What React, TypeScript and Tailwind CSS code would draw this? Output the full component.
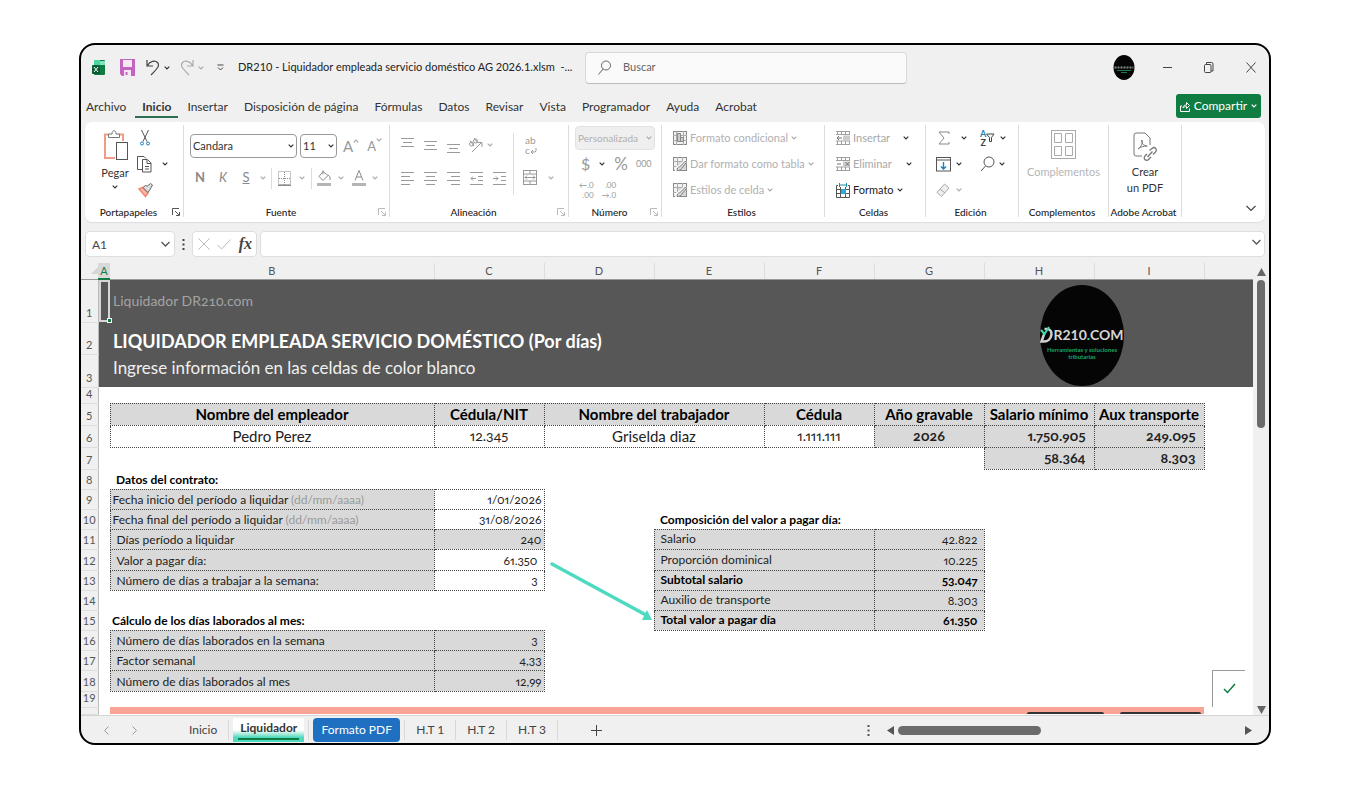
import React, { useState } from 'react';

type IconProps = { w: number; h: number; className?: string; children: React.ReactNode };

const Icon = ({ w, h, className = '', children }: IconProps) => (
  <svg width={w} height={h} viewBox={`0 0 ${w} ${h}`} fill="none" stroke="currentColor" className={`shrink-0 ${className}`} aria-hidden="true">
    {children}
  </svg>
);

const Chevron = ({ className = 'text-[#333]' }: { className?: string }) => (
  <Icon w={6} h={4} className={className}>
    <path d="M0.7 0.7 3 3 5.3 0.7" strokeWidth="1.2" />
  </Icon>
);

const Launcher = ({ className = 'text-[#aaa]' }: { className?: string }) => (
  <Icon w={8} h={8} className={className}>
    <path d="M0.5 7V0.5H7M3 3l4 4M7.5 4v3.5H4" />
  </Icon>
);

type GroupProps = { label: string; width: string; launcher?: string; children: React.ReactNode };

const Group = ({ label, width, launcher, children }: GroupProps) => (
  <section className={`flex flex-col shrink-0 border-r border-[#dcdcdc] h-[92px] ${width}`}>
    <div className="h-[78px] shrink-0">{children}</div>
    <div className="flex items-center h-[18px] shrink-0 pr-[3px]">
      <h2 className="grow text-center text-[10px] font-medium text-[#222] whitespace-nowrap">{label}</h2>
      {launcher && (
        <button aria-label={`Opciones de ${label}`}>
          <Launcher className={launcher} />
        </button>
      )}
    </div>
  </section>
);

type AlignProps = { lines: [number, number][]; label: string };

const AlignButton = ({ lines, label }: AlignProps) => (
  <button aria-label={label} className="w-[23px] flex justify-center text-[#9a9a9a]">
    <Icon w={13} h={15}>
      {lines.map(([x, len], i) => (
        <path key={i} d={`M${x} ${i * 4 + (lines.length === 4 ? 1.5 : 3.5)}h${len}`} />
      ))}
    </Icon>
  </button>
);

const TableIcon = ({ pen }: { pen?: boolean }) => (
  <Icon w={14} h={14} className="text-[#8a8a8a]">
    <rect x="0.5" y="0.5" width="13" height="13" fill="#f2f2f2" />
    {pen ? (
      <>
        <path d="M4.500 0v14M9.500 0v5M0 4.500h14M0 9.500h5" stroke="#aaa" />
        <rect x="5" y="5" width="8" height="8" fill="#d8d8d8" stroke="none" />
        <path d="M4 14c0-3 1-4 3-4L13 4" stroke="#fff" strokeWidth="4" />
        <path d="M4 13.500c0-2 1-3.500 2.500-3.500L12.500 4l1 1.500L8.500 11.500C8 13 6 13.500 4 13.500z" fill="#ddd" stroke="#777" />
      </>
    ) : (
      <>
        <path d="M3.500 0v14M10.500 0v14M0 4.500h14M0 9.500h14" stroke="#aaa" />
        <path d="M4.500 2.500h3v8h-3zM7.500 6.500h3v4h-3z" fill="#ccc" stroke="#888" />
      </>
    )}
  </Icon>
);

const CellsIcon = ({ mark }: { mark: string }) => (
  <Icon w={14} h={14} className="text-[#a0a0a0]">
    <path d="M0 0.500h14M0 13.500h14M1.500 0.500v3M1.500 10v4M5.500 0.500v3M9.500 0.500v3M13.500 0v4M5.500 10v4M9.500 10v4M13.500 10v4M0 10h14M0 3.500h14" />
    <rect x="7" y="4.500" width="7" height="5" fill="#ccc" stroke="none" />
    <path d={mark} stroke="#777" />
  </Icon>
);

const menuTabs = ['Archivo', 'Inicio', 'Insertar', 'Disposición de página', 'Fórmulas', 'Datos', 'Revisar', 'Vista', 'Programador', 'Ayuda', 'Acrobat'];

const columns = [
  { name: 'A', width: 'w-[12px]' },
  { name: 'B', width: 'w-[324px]' },
  { name: 'C', width: 'w-[110px]' },
  { name: 'D', width: 'w-[110px]' },
  { name: 'E', width: 'w-[110px]' },
  { name: 'F', width: 'w-[110px]' },
  { name: 'G', width: 'w-[110px]' },
  { name: 'H', width: 'w-[110px]' },
  { name: 'I', width: 'w-[110px]' },
];

const RowNum = ({ n }: { n?: number }) => (
  <th scope="row" className="bg-[#f0f0f0] border-r border-r-[#bbb] border-b border-b-[#ddd] align-bottom text-[11px] leading-[12px] pb-[3px] normal-nums font-normal text-[#555] text-center">
    {n}
  </th>
);

const box = 'border border-dotted border-[#444] ';
const gray = 'bg-[#d9d9d9] ';

const TitleBar = () => (
  <header className="flex items-center h-[45px] text-[#444]">
    <div className="flex items-center w-[504px] shrink-0 pl-[11px]">
      <Icon w={14} h={16}>
        <rect x="2" y="0" width="11" height="15" rx="1" fill="#107c41" stroke="none" />
        <path d="M2 0h6v6H2z" fill="#4bd3a0" stroke="none" />
        <path d="M8 1h5v4H8z" fill="#7fe3c0" stroke="none" />
        <rect x="0" y="5" width="8" height="9" rx="1" fill="#0b5c33" stroke="none" />
        <path d="m2 7 4 5M6 7l-4 5" stroke="#fff" />
      </Icon>
      <button aria-label="Guardar" className="ml-[14px]">
        <Icon w={15} h={17}>
          <path d="M0 0h15v17H2l-2-2z" fill="#c265c0" stroke="none" />
          <path d="M3 1h9v7H3zM4 11h7v6H4z" fill="#f5e8f5" stroke="none" />
          <path d="M6.500 13v3" stroke="#c265c0" strokeWidth="2" />
        </Icon>
      </button>
      <button aria-label="Deshacer" className="flex items-center gap-[4px] ml-[11px]">
        <Icon w={14} h={17}>
          <path d="M1 1v6h6M1.500 6.500C4 2 9 1 11.500 3.500 14 6.500 12 9 5 16" strokeWidth="1.200" />
        </Icon>
        <Chevron />
      </button>
      <button aria-label="Rehacer" className="flex items-center gap-[4px] ml-[10px] text-[#aaa]">
        <Icon w={14} h={17}>
          <path d="M13 1v6H7M12.500 6.500C10 2 5 1 2.500 3.500 0 6.500 2 9 9 16" strokeWidth="1.200" />
        </Icon>
        <Chevron className="text-[#aaa]" />
      </button>
      <button aria-label="Personalizar" className="ml-[13px]">
        <Icon w={7} h={7}>
          <path d="M0.500 1h6M1 3.500 3.500 6 6 3.500" />
        </Icon>
      </button>
      <h1 className="ml-[14px] text-[11px] text-[#222] whitespace-nowrap">DR210 - Liquidador empleada servicio doméstico AG 2026.1.xlsm&nbsp; -...</h1>
    </div>
    <label className="flex items-center gap-[12px] w-[322px] h-[32px] pl-[12px] bg-[#fafafa] border border-[#d8d8d8] border-b-[#bbb] rounded-[4px] text-[#666]">
      <Icon w={13} h={15}>
        <circle cx="8" cy="5.500" r="4.500" />
        <path d="M5 9 0.500 14.500" />
      </Icon>
      <input aria-label="Buscar" placeholder="Buscar" className="grow min-w-0 bg-transparent outline-none text-[11px] placeholder:text-[#666]" />
    </label>
    <div className="flex items-center gap-[22px] ml-auto pr-[8px]">
      <Icon w={22} h={25}>
        <ellipse cx="11" cy="12.500" rx="10.500" ry="12.500" fill="#050505" stroke="none" />
        <path d="M1.500 12.500h19" stroke="#888" strokeWidth="2" strokeDasharray="2 1" />
        <path d="M4 15.500h14" stroke="#1c7a4c" />
        <path d="M8 17.500h6" stroke="#1c7a4c" />
      </Icon>
      <button aria-label="Minimizar" className="w-[20px] flex justify-center">
        <Icon w={9} h={9}><path d="M0 4.500h9" /></Icon>
      </button>
      <button aria-label="Restaurar" className="w-[20px] flex justify-center">
        <Icon w={10} h={11}>
          <rect x="0.500" y="2.500" width="6.500" height="8" rx="1" />
          <path d="M2.500 2V0.500H7.500Q9 0.500 9 2v7H7" />
        </Icon>
      </button>
      <button aria-label="Cerrar" className="w-[20px] flex justify-center">
        <Icon w={10} h={11}><path d="m0.500 0.500 9 10M9.500 0.500l-9 10" /></Icon>
      </button>
    </div>
  </header>
);

const MenuBar = () => (
  <nav className="flex items-center h-[32px] pl-[5px] pr-[8px]">
    <ul className="flex gap-[16px] mt-[2px] text-[12px] text-[#333] whitespace-nowrap">
      {menuTabs.map((tab) => (
        <li key={tab} className="relative">
          <button className={tab === 'Inicio' ? 'font-bold' : ''}>{tab}</button>
          {tab === 'Inicio' && <span className="absolute -inset-x-[7px] bottom-[-2px] h-[2px] bg-[#2c6e50]" />}
        </li>
      ))}
    </ul>
    <button className="flex items-center justify-center gap-[4px] ml-auto w-[85px] h-[24px] rounded-[3px] bg-[#107c41] text-white text-[12px]">
      <Icon w={10} h={11}>
        <path d="M2 5H0.500v5.500h9V7.500M3 7c0-2.500 2-3 3.500-3V1.500L9.500 4.500 6.500 7.500V5.500C5 5.500 4 6 3 7z" />
      </Icon>
      Compartir
      <Chevron className="text-white" />
    </button>
  </nav>
);

const Ribbon = () => (
  <div className="flex mx-[4px] h-[100px] pt-[3px] bg-white rounded-[7px] shadow-[0_1px_1px_#ddd] text-[11px]">
    <Group label="Portapapeles" width="w-[99px]" launcher="text-[#555]">
      <div className="flex">
        <button className="flex flex-col items-center ml-[14px] w-[32px] pt-[5px] text-[#333]">
          <Icon w={25} h={30} className="ml-[2px]">
            <path d="M4 4.500H1V28H11" stroke="#f29b88" strokeWidth="2" />
            <path d="M14 4.500h5V11" stroke="#f29b88" strokeWidth="2" />
            <path d="M4.500 7.500V4h3.500c0-4.500 4-4.500 4 0h3.500v3.500z" fill="#fff" stroke="#777" />
            <rect x="12.500" y="12.500" width="11" height="17" fill="#fff" stroke="#555" />
          </Icon>
          <span className="leading-[16px] mt-[5px]">Pegar</span>
          <span className="mt-[4px]"><Chevron /></span>
        </button>
        <div className="flex flex-col ml-[5px]">
          <button aria-label="Cortar" className="h-[26px] w-[18px] flex items-center justify-center">
            <Icon w={10} h={16}>
              <path d="M1.500 0 7 11.500M8.500 0 3 11.500" stroke="#555" />
              <circle cx="2" cy="13.500" r="1.500" stroke="#1f7fc0" />
              <circle cx="8" cy="13.500" r="1.500" stroke="#1f7fc0" />
            </Icon>
          </button>
          <button aria-label="Copiar" className="h-[26px] flex items-center gap-[10px] pl-[1px]">
            <Icon w={15} h={17} className="text-[#555]">
              <path d="M5 13.500H0.500V0.500H7l2 2" />
              <path d="M5.500 3.500h5l3.500 3.500v9H5.500zM10 4v3.500h4M8 10.500h4M8 13h4" />
            </Icon>
            <Chevron />
          </button>
          <button aria-label="Copiar formato" className="h-[26px] w-[18px] flex items-center justify-center">
            <Icon w={15} h={15}>
              <path d="M1 6 7.500 13.500 10 10 4.500 4.500z" fill="#fbb8a6" stroke="#f08a74" strokeWidth="1.500" />
              <path d="M5 4.500 10 9.500 12 6.500 14.500 2 12.500 0.500 9.500 3 7.500 2.500z" fill="#ddd" stroke="#666" />
            </Icon>
          </button>
        </div>
      </div>
    </Group>

    <Group label="Fuente" width="w-[206px]" launcher="text-[#bbb]">
      <div className="flex items-center gap-[3px] pl-[6px] pt-[9px] text-[#333]">
        <div className="relative">
          <select aria-label="Fuente" className="appearance-none w-[107px] h-[24px] pl-[2px] border border-[#999] rounded-[4px] text-[11px] bg-white">
            <option>Candara</option>
          </select>
          <span className="absolute right-[3px] top-[10px]"><Chevron /></span>
        </div>
        <div className="relative">
          <select aria-label="Tamaño de fuente" className="appearance-none w-[37px] h-[24px] pl-[2px] border border-[#999] rounded-[4px] text-[11px] bg-white">
            <option>11</option>
          </select>
          <span className="absolute right-[3px] top-[10px]"><Chevron /></span>
        </div>
        <button aria-label="Aumentar tamaño" className="flex ml-[3px] text-[#999] text-[15px] leading-[20px]">
          A<Chevron className="mt-[3px] rotate-180 text-[#aaa]" />
        </button>
        <button aria-label="Disminuir tamaño" className="flex ml-[5px] text-[#999] text-[13px] leading-[20px]">
          A<Chevron className="mt-[2px] text-[#aaa]" />
        </button>
      </div>
      <div className="flex items-center h-[24px] mt-[8px] pl-[6px] text-[#8a8a8a] text-[13px]">
        <button className="w-[20px] font-bold">N</button>
        <button className="w-[26px] italic">K</button>
        <button className="w-[20px] underline">S</button>
        <span className="w-[14px] flex justify-center"><Chevron className="text-[#aaa]" /></span>
        <span className="w-px h-[21px] bg-[#ddd] ml-[1px]" />
        <button aria-label="Bordes" className="flex items-center gap-[8px] ml-[6px]">
          <Icon w={13} h={15}>
            <rect x="0.500" y="0.500" width="12" height="13" strokeDasharray="1 1" />
            <path d="M6.500 1v13M1 7.500h12" strokeDasharray="1 1" />
            <path d="M0 14.500h13" strokeWidth="1.500" />
          </Icon>
          <Chevron className="text-[#aaa]" />
        </button>
        <span className="w-px h-[21px] bg-[#ddd] ml-[6px]" />
        <button aria-label="Color de relleno" className="flex items-center gap-[6px] ml-[5px]">
          <Icon w={15} h={16}>
            <path d="M6 0.500v4M6 1.500 2 6.500l4 4 5-5zM11 5c1.500 1 2.500 2 2 5" />
            <path d="M0 14.500h14" stroke="#b5b5b5" strokeWidth="3" />
          </Icon>
          <Chevron className="text-[#aaa]" />
        </button>
        <button aria-label="Color de fuente" className="flex items-center gap-[6px] ml-[8px]">
          <Icon w={14} h={16}>
            <path d="M3 10.500 7 0.500l4 10M4.500 7h5" />
            <path d="M0 14.500h14" stroke="#b5b5b5" strokeWidth="3" />
          </Icon>
          <Chevron className="text-[#aaa]" />
        </button>
      </div>
    </Group>

    <Group label="Alineación" width="w-[179px]" launcher="text-[#bbb]">
      <div className="flex pl-[6px]">
        <div className="w-[118px] border-r border-[#ddd] h-[62px] mt-[8px]">
          <div className="flex items-center h-[24px]">
            <span className="-mt-[6px]"><AlignButton label="Alinear arriba" lines={[[0, 13], [2, 9], [0, 13]]} /></span>
            <AlignButton label="Alinear en medio" lines={[[0, 13], [2, 9], [0, 13]]} />
            <span className="mt-[6px]"><AlignButton label="Alinear abajo" lines={[[0, 13], [2, 9], [0, 13]]} /></span>
            <button aria-label="Orientación" className="flex items-center gap-[4px] ml-[3px] text-[#999]">
              <Icon w={15} h={15}>
                <circle cx="3.500" cy="6" r="2" />
                <circle cx="7.500" cy="3" r="2" />
                <path d="M2 2.500 6 8M6 0l3.500 4.500M4 14 13 5M9.500 4.500H14V9" />
              </Icon>
              <Chevron className="text-[#aaa]" />
            </button>
          </div>
          <div className="flex items-center h-[24px] mt-[9px]">
            <AlignButton label="Alinear a la izquierda" lines={[[0, 13], [0, 9], [0, 13], [0, 9]]} />
            <AlignButton label="Centrar" lines={[[0, 13], [2, 9], [0, 13], [2, 9]]} />
            <AlignButton label="Alinear a la derecha" lines={[[0, 13], [4, 9], [0, 13], [4, 9]]} />
            <button aria-label="Disminuir sangría" className="w-[23px] flex justify-center text-[#9a9a9a]">
              <Icon w={13} h={15}><path d="M0 1.500h13M8 5.500h5M8 9.500h5M0 13.500h13M6 7.500H1M3 5.500l-2 2 2 2" /></Icon>
            </button>
            <button aria-label="Aumentar sangría" className="w-[23px] flex justify-center text-[#9a9a9a]">
              <Icon w={13} h={15}><path d="M0 1.500h13M8 5.500h5M8 9.500h5M0 13.500h13M0 7.500h5M3 5.500l2 2-2 2" /></Icon>
            </button>
          </div>
        </div>
        <div className="flex flex-col text-[#999] pl-[9px] pt-[10px]">
          <button aria-label="Ajustar texto" className="flex flex-col text-[10px] leading-[10px] items-start h-[22px] pl-[2px]">
            <span>ab</span>
            <span className="flex">
              c<Icon w={7} h={8} className="mt-[2px]"><path d="M1 5h4q1.500-1 1-4M3 3 1 5l2 2" /></Icon>
            </span>
          </button>
          <button aria-label="Combinar y centrar" className="flex items-center gap-[11px] mt-[13px]">
            <Icon w={14} h={15}>
              <rect x="0.500" y="0.500" width="13" height="14" />
              <path d="M0 4h14M0 11h14M7 0v4M7 11v4M2 7.500h10M4 5.500l-2 2 2 2M10 5.500l2 2-2 2" />
            </Icon>
            <Chevron className="text-[#aaa]" />
          </button>
        </div>
      </div>
    </Group>

    <Group label="Número" width="w-[93px]" launcher="text-[#bbb]">
      <div className="px-[6px] text-[#999]">
        <div className="relative h-[26px] pt-[1px]">
          <select aria-label="Formato de número" disabled className="appearance-none w-full h-[24px] pl-[2px] bg-[#efefef] border border-[#e2e2e2] rounded-[4px] text-[10px] text-[#b0b0b0] opacity-100">
            <option>Personalizada</option>
          </select>
          <span className="absolute right-[3px] top-[11px]"><Chevron className="text-[#aaa]" /></span>
        </div>
        <div className="flex items-center h-[26px] pl-[6px]">
          <button className="text-[16px]">$</button>
          <span className="ml-[9px]"><Chevron /></span>
          <button className="ml-[9px] text-[17px]">%</button>
          <button className="ml-[8px] text-[9px]">000</button>
        </div>
        <div className="flex items-center h-[26px] pl-[4px] gap-[8px] text-[8px] leading-[10px]">
          <button aria-label="Aumentar decimales" className="text-right"><span className="block">←.0</span><span className="block">.00</span></button>
          <button aria-label="Disminuir decimales" className="text-right"><span className="block">.00</span><span className="block">→.0</span></button>
        </div>
      </div>
    </Group>

    <Group label="Estilos" width="w-[163px]">
      <div className="pl-[11px] text-[#b0b0b0] whitespace-nowrap">
        <button className="flex items-center gap-[3px] h-[26px]"><TableIcon />Formato condicional<Chevron className="text-[#aaa]" /></button>
        <button className="flex items-center gap-[3px] h-[26px]"><TableIcon pen />Dar formato como tabla<Chevron className="text-[#aaa]" /></button>
        <button className="flex items-center gap-[3px] h-[26px]"><TableIcon pen />Estilos de celda<Chevron className="text-[#aaa]" /></button>
      </div>
    </Group>

    <Group label="Celdas" width="w-[101px]">
      <div className="pl-[11px] text-[#a8a8a8]">
        <div className="flex items-center h-[26px] w-[73px] justify-between">
          <button className="flex items-center gap-[3px]"><CellsIcon mark="M6 7H1M3 5 1 7l2 2" />Insertar</button><Chevron />
        </div>
        <div className="flex items-center h-[26px] w-[76px] justify-between">
          <button className="flex items-center gap-[3px]"><CellsIcon mark="M1 7h4M9.500 5l4 4M13.500 5l-4 4" />Eliminar</button><Chevron />
        </div>
        <button className="flex items-center gap-[3px] h-[26px] text-[#222]">
          <Icon w={14} h={15} className="text-[#555]">
            <path d="M2 2.500H0.500v12h13v-12H12M0 6.500h14M0 10.500h14M4.500 4v11M9.500 4v11" />
            <path d="M5 6h5v5H5z" fill="#2aa8d8" stroke="none" />
            <path d="M3.500 0v4M10.500 0v4M4 2h6" stroke="#1590a8" />
          </Icon>
          Formato<Chevron />
        </button>
      </div>
    </Group>

    <Group label="Edición" width="w-[93px]">
      <div className="grid grid-cols-[44px_40px] pl-[10px] text-[#888]">
        <button aria-label="Autosuma" className="flex items-center gap-[11px] h-[26px] pl-[2px]">
          <Icon w={12} h={14}><path d="M11 3V1H1l5 6-5 6h10v-2" /></Icon>
          <Chevron />
        </button>
        <button aria-label="Ordenar y filtrar" className="flex items-center gap-[5px] h-[26px] text-[#444]">
          <span className="flex">
            <span className="flex flex-col text-[9px] leading-[9px] font-bold"><span className="text-[#1a7fb0]">A</span><span>Z</span></span>
            <Icon w={9} h={10} className="mt-[4px]"><path d="M0.500 1h7.500L5.500 4.500v4h-2v-4z" /></Icon>
          </span>
          <Chevron />
        </button>
        <button aria-label="Rellenar" className="flex items-center gap-[5px] h-[26px]">
          <Icon w={15} h={15} className="text-[#555]">
            <rect x="0.500" y="0.500" width="14" height="13.500" />
            <path d="M0 3h15" />
            <path d="M7.500 5v7M5 9.500 7.500 12 10 9.500" stroke="#1a80c0" strokeWidth="1.400" />
          </Icon>
          <Chevron />
        </button>
        <button aria-label="Buscar y seleccionar" className="flex items-center gap-[4px] h-[26px]">
          <Icon w={15} h={16} className="text-[#555]"><circle cx="9" cy="6" r="5" /><path d="M5.500 10 1 15" /></Icon>
          <Chevron />
        </button>
        <button aria-label="Borrar" className="flex items-center gap-[5px] h-[26px]">
          <Icon w={15} h={15} className="text-[#aaa]"><path d="M1 9.500 8.500 1 13 5 5.500 13.500zM4 6l5 4" fill="#eee" /></Icon>
          <Chevron className="text-[#aaa]" />
        </button>
      </div>
    </Group>

    <Group label="Complementos" width="w-[90px]">
      <button className="flex flex-col items-center w-full pt-[5px] text-[#b5b5b5]">
        <Icon w={25} h={29} className="text-[#aaa]">
          <rect x="0.500" y="0.500" width="24" height="28" />
          <path d="M3.500 3.500h7v9h-7zM14.500 3.500h7v9h-7zM3.500 16.500h7v9h-7zM14.500 16.500h7v9h-7z" />
        </Icon>
        <span className="leading-[16px] mt-[5px]">Complementos</span>
      </button>
    </Group>

    <Group label="Adobe Acrobat" width="w-[73px]">
      <button className="flex flex-col items-center w-full pt-[7px] text-[#333]">
        <Icon w={24} h={29} className="text-[#777]">
          <path d="M9 24H3Q1 24 1 22V3Q1 1 3 1h9l5 5v7" />
          <path d="M5 17c4-3 5-7 4-9M8.500 8c0 4 3 6 6 6M5 17c2-2 6-3 9-3" />
          <path d="m14 22-2 2c-2.500 3 1.500 5.500 3.500 3.500L18 25M16.500 18.500 19 16.500c3-2.500 5.500 1 3.500 3.500L20 22.500M14.500 25 19.500 19.500" strokeWidth="1.300" />
        </Icon>
        <span className="leading-[16px] mt-[3px]">Crear<br />un PDF</span>
      </button>
    </Group>

    <button aria-label="Contraer la cinta" className="ml-auto self-end mr-[9px] mb-[10px]">
      <Icon w={10} h={7} className="text-[#444]"><path d="M0.500 1 5 5.500 9.500 1" strokeWidth="1.200" /></Icon>
    </button>
  </div>
);

const FormulaBar = () => (
  <div className="flex items-center h-[26px] mt-[9px] px-[4px]">
    <label className="relative">
      <input aria-label="Cuadro de nombres" defaultValue="A1" className="block w-[90px] h-[26px] pl-[6px] bg-white border border-[#dedede] rounded-[4px] text-[12px] text-[#444]" />
      <span className="absolute right-[5px] top-[10px] text-[#555]">
        <Icon w={9} h={7}><path d="M0.500 1 4.500 5 8.500 1" strokeWidth="1.300" /></Icon>
      </span>
    </label>
    <Icon w={3} h={12} className="ml-[7px] text-[#444]"><path d="M1.500 1v11" strokeWidth="2" strokeDasharray="2 2.500" /></Icon>
    <div className="flex items-center justify-between w-[65px] h-[26px] ml-[7px] pl-[5px] pr-[4px] bg-white border border-[#dedede] rounded-[4px] text-[#bbb]">
      <button aria-label="Cancelar"><Icon w={12} h={12}><path d="m0.500 0.500 11 11M11.500 0.500l-11 11" /></Icon></button>
      <button aria-label="Introducir"><Icon w={14} h={11}><path d="M0.500 6 4.500 10 13.500 0.500" /></Icon></button>
      <button aria-label="Insertar función" className="font-['Liberation_Serif',serif] italic font-bold text-[16px] leading-[20px] text-[#444]">fx</button>
    </div>
    <div className="relative grow ml-[3px]">
      <input aria-label="Barra de fórmulas" className="block w-full h-[26px] bg-white border border-[#dedede] rounded-[4px] px-[6px] text-[12px]" />
      <Icon w={9} h={7} className="absolute right-[4px] top-[8px] text-[#555]"><path d="M0.500 1 4.500 5 8.500 1" strokeWidth="1.300" /></Icon>
    </div>
  </div>
);

const Logo = () => (
  <div className="absolute left-[56px] top-[5px] w-[84px] h-[101px] rounded-[50%] bg-[#050505] flex flex-col items-center pt-[41px]">
    <div className="flex items-center text-[14px] leading-[18px] font-bold text-[#d5d5d5]">
      <Icon w={13} h={18}>
        <path d="M4.500 3H7c7 0 5.500 12.500-3 12.500H1.500L4.500 7" stroke="#d0d0d0" strokeWidth="2.500" />
        <path d="M1 4 4.500 8 9 1" stroke="#3fd9a8" strokeWidth="2" />
      </Icon>
      <span>R210<span className="text-[#3fd9a8]">.</span>COM</span>
    </div>
    <p className="text-[6px] leading-[7px] font-bold text-[#17a566] text-center whitespace-nowrap mt-[2px]">Herramientas y soluciones<br />tributarias</p>
  </div>
);

const Sheet = () => (
  <table className="table-fixed border-collapse w-full bg-white text-[#222] whitespace-nowrap">
    <colgroup>
      <col className="w-[17px]" />
      {columns.map((c) => (
        <col key={c.name} className={c.width} />
      ))}
      <col />
    </colgroup>
    <thead>
      <tr className="h-[16px] bg-[#f0f0f0] text-[11px] leading-[15px] text-[#555]">
        <td className="border-b border-[#999]">
          <Icon w={7} h={7} className="ml-auto text-[#d5d5d5]"><path d="M7 0v7H0z" fill="currentColor" stroke="none" /></Icon>
        </td>
        {columns.map((c) => (
          <th key={c.name} scope="col" className={c.name === 'A' ? 'font-normal bg-[#d8d8d8] text-[#107c41] border-b-2 border-[#107c41] leading-[13px]' : 'font-normal border-r border-r-[#ddd] border-b border-b-[#999]'}>
            {c.name}
          </th>
        ))}
        <td className="border-b border-[#999]" />
      </tr>
    </thead>
    <tbody>
      <tr className="h-[43px] bg-[#575757]">
        <RowNum n={1} />
        <td className="relative">
          <span className="absolute inset-y-0 left-0 right-0 border-2 border-[#d6d6d6]" />
          <span className="absolute -right-[2px] -bottom-[1px] w-[5px] h-[5px] bg-[#107c41] border border-white" />
        </td>
        <td colSpan={6} className="pl-[3px] text-[14px] text-[#a3a3a3] oldstyle-nums">Liquidador DR210.com</td>
        <td colSpan={3} className="relative"><Logo /></td>
      </tr>
      <tr className="h-[32px] bg-[#575757]">
        <RowNum n={2} />
        <td />
        <td colSpan={9} className="pl-[3px] align-bottom text-[18px] leading-[26px] font-bold text-white">LIQUIDADOR EMPLEADA SERVICIO DOMÉSTICO (Por días)</td>
      </tr>
      <tr className="h-[33px] bg-[#575757]">
        <RowNum n={3} />
        <td />
        <td colSpan={9} className="pl-[3px] align-top text-[17px] leading-[28px] text-[#f0f0f0]">Ingrese información en las celdas de color blanco</td>
      </tr>
      <tr className="h-[16px]">
        <RowNum n={4} />
      </tr>
      <tr className="h-[22px] text-[15px] leading-[20px] text-black text-center">
        <RowNum n={5} />
        <td />
        <th className={box + gray}>Nombre del empleador</th>
        <th className={box + gray}>Cédula/NIT</th>
        <th colSpan={2} className={box + gray}>Nombre del trabajador</th>
        <th className={box + gray}>Cédula</th>
        <th className={box + gray}>Año gravable</th>
        <th className={box + gray}>Salario mínimo</th>
        <th className={box + gray}>Aux transporte</th>
      </tr>
      <tr className="h-[22px] text-[15px] leading-[20px] text-center oldstyle-nums proportional-nums">
        <RowNum n={6} />
        <td />
        <td className={box}>Pedro Perez</td>
        <td className={box + 'text-[14px]'}>12.345</td>
        <td colSpan={2} className={box}>Griselda diaz</td>
        <td className={box + 'text-[14px]'}>1.111.111</td>
        <td className={box + gray + 'text-[14px] font-bold'}>2026</td>
        <td className={box + gray + 'text-[14px] font-bold text-right pr-[8px]'}>1.750.905</td>
        <td className={box + gray + 'text-[14px] font-bold text-right pr-[8px]'}>249.095</td>
      </tr>
      <tr className="h-[22px] text-[14px] leading-[20px] font-bold text-right oldstyle-nums proportional-nums">
        <RowNum n={7} />
        <td colSpan={7} />
        <td className={box + gray + 'pr-[8px]'}>58.364</td>
        <td className={box + gray + 'pr-[8px]'}>8.303</td>
      </tr>
      <tr className="h-[20px] text-[12px] leading-[16px]">
        <RowNum n={8} />
        <td />
        <th className="pl-[6px] pt-[2px] text-left text-black">Datos del contrato:</th>
      </tr>
      <tr className="h-[20px] text-[12px] leading-[16px] oldstyle-nums proportional-nums">
        <RowNum n={9} />
        <td />
        <td className={box + gray + 'pt-[2px] pl-[2px]'}>Fecha inicio del período a liquidar <span className="text-[#999]">(dd/mm/aaaa)</span></td>
        <td className={box + 'pt-[2px] pr-[2px] text-right'}>1/01/2026</td>
      </tr>
      <tr className="h-[20px] text-[12px] leading-[16px] oldstyle-nums proportional-nums">
        <RowNum n={10} />
        <td />
        <td className={box + gray + 'pt-[2px] pl-[2px]'}>Fecha final del período a liquidar <span className="text-[#999]">(dd/mm/aaaa)</span></td>
        <td className={box + 'pt-[2px] pr-[2px] text-right'}>31/08/2026</td>
        <td />
        <th colSpan={2} className="pl-[6px] pt-[2px] text-left text-black">Composición del valor a pagar día:</th>
      </tr>
      <tr className="h-[20px] text-[12px] leading-[16px] oldstyle-nums proportional-nums">
        <RowNum n={11} />
        <td />
        <td className={box + gray + 'pt-[2px] pl-[6px]'}>Días período a liquidar</td>
        <td className={box + gray + 'pt-[2px] pr-[2px] text-right'}>240</td>
        <td />
        <td colSpan={2} className={box + gray + 'pl-[6px]'}>Salario</td>
        <td className={box + gray + 'pt-[2px] pr-[6px] text-right'}>42.822</td>
      </tr>
      <tr className="h-[21px] text-[12px] leading-[16px] oldstyle-nums proportional-nums">
        <RowNum n={12} />
        <td />
        <td className={box + gray + 'pt-[2px] pl-[6px]'}>Valor a pagar día:</td>
        <td className={box + 'pt-[2px] pr-[6px] text-right'}>61.350</td>
        <td className="relative">
          <Icon w={104} h={62} className="absolute left-[5px] top-[13px] z-10 text-[#4edac0]">
            <path d="M2 2 96 53" strokeWidth="3.500" strokeLinecap="round" />
            <path d="M102 58 92 58 97 48z" fill="currentColor" stroke="none" />
          </Icon>
        </td>
        <td colSpan={2} className={box + gray + 'pl-[6px]'}>Proporción dominical</td>
        <td className={box + gray + 'pt-[2px] pr-[6px] text-right'}>10.225</td>
      </tr>
      <tr className="h-[20px] text-[12px] leading-[16px] oldstyle-nums proportional-nums">
        <RowNum n={13} />
        <td />
        <td className={box + gray + 'pt-[2px] pl-[6px]'}>Número de días a trabajar a la semana:</td>
        <td className={box + 'pt-[2px] pr-[6px] text-right'}>3</td>
        <td />
        <td colSpan={2} className={box + gray + 'pl-[6px] font-bold text-black'}>Subtotal salario</td>
        <td className={box + gray + 'pt-[2px] pr-[6px] text-right font-bold text-black'}>53.047</td>
      </tr>
      <tr className="h-[20px] text-[12px] leading-[16px] oldstyle-nums proportional-nums">
        <RowNum n={14} />
        <td colSpan={4} />
        <td colSpan={2} className={box + gray + 'pl-[6px]'}>Auxilio de transporte</td>
        <td className={box + gray + 'pt-[2px] pr-[6px] text-right'}>8.303</td>
      </tr>
      <tr className="h-[20px] text-[12px] leading-[16px] oldstyle-nums proportional-nums">
        <RowNum n={15} />
        <td />
        <th className="pl-[2px] pt-[2px] text-left text-black">Cálculo de los días laborados al mes:</th>
        <td colSpan={2} />
        <td colSpan={2} className={box + gray + 'pl-[6px] font-bold text-black'}>Total valor a pagar día</td>
        <td className={box + gray + 'pt-[2px] pr-[6px] text-right font-bold text-black'}>61.350</td>
      </tr>
      <tr className="h-[20px] text-[12px] leading-[16px] oldstyle-nums proportional-nums">
        <RowNum n={16} />
        <td />
        <td className={box + gray + 'pt-[2px] pl-[6px]'}>Número de días laborados en la semana</td>
        <td className={box + gray + 'pt-[2px] pr-[6px] text-right'}>3</td>
      </tr>
      <tr className="h-[20px] text-[12px] leading-[16px] oldstyle-nums proportional-nums">
        <RowNum n={17} />
        <td />
        <td className={box + gray + 'pt-[2px] pl-[6px]'}>Factor semanal</td>
        <td className={box + gray + 'pt-[2px] pr-[2px] text-right'}>4,33</td>
      </tr>
      <tr className="h-[21px] text-[12px] leading-[16px] oldstyle-nums proportional-nums">
        <RowNum n={18} />
        <td />
        <td className={box + gray + 'pt-[2px] pl-[6px]'}>Número de días laborados al mes</td>
        <td className={box + gray + 'pt-[2px] pr-[2px] text-right'}>12,99</td>
      </tr>
      <tr className="h-[16px]">
        <RowNum n={19} />
      </tr>
      <tr className="h-[7px]">
        <RowNum />
        <td />
        <td colSpan={6} className="bg-[#f9a495]" />
        <td colSpan={2} className="relative bg-[#f9a495]">
          <span className="absolute left-[43px] bottom-0 w-[77px] h-[2px] rounded-t-[2px] bg-[#333]" />
          <span className="absolute left-[136px] bottom-0 w-[81px] h-[2px] rounded-t-[2px] bg-[#333]" />
        </td>
        <td />
      </tr>
    </tbody>
  </table>
);

const SheetTabs = ({ active, onSelect }: { active: string; onSelect: (name: string) => void }) => {
  const base = 'relative h-[24px] shrink-0 ';
  const color = (name: string) => {
    if (name === active) return 'w-[71px] mx-[4px] font-bold pb-[4px] text-[#333] bg-gradient-to-b from-white from-50% to-[#4edac0] to-80%';
    if (name === 'Formato PDF') return 'w-[87px] mx-[4px] rounded-[4px] bg-[#1f70c1] text-white';
    return 'px-[11px] text-[#444]';
  };
  return (
    <footer className="flex items-center h-[28px] pt-[2px] border-t border-[#d5d5d5] text-[12px] whitespace-nowrap">
      <div className="flex items-center w-[97px] shrink-0 pl-[23px] gap-[23px] text-[#999]">
        <button aria-label="Hoja anterior"><Icon w={5} h={9}><path d="M4.500 0.500 0.500 4.500l4 4" /></Icon></button>
        <button aria-label="Hoja siguiente"><Icon w={5} h={9}><path d="m0.500 0.500 4 4-4 4" /></Icon></button>
      </div>
      {['Inicio', 'Liquidador', 'Formato PDF', 'H.T 1', 'H.T 2', 'H.T 3'].map((name) => (
        <div key={name} className="flex items-center border-r border-[#d8d8d8] h-[20px]">
          <button className={base + color(name)} onClick={() => onSelect(name)}>
            {name}
            {name === active && <span className="absolute left-[5px] right-[5px] bottom-[2px] h-[2px] bg-[#107c41]" />}
          </button>
        </div>
      ))}
      <button aria-label="Hoja nueva" className="ml-[33px] text-[#444]"><Icon w={11} h={11}><path d="M5.500 0v11M0 5.500h11" /></Icon></button>
      <div className="flex items-center ml-auto pr-[17px] text-[#555]">
        <Icon w={3} h={12}><path d="M1.500 1v11" strokeWidth="2" strokeDasharray="2 2.500" /></Icon>
        <Icon w={7} h={9} className="ml-[17px]"><path d="M7 0v9L0 4.500z" fill="currentColor" stroke="none" /></Icon>
        <div className="w-[347px] h-[9px] ml-[4px]">
          <div className="w-[143px] h-[9px] rounded-full bg-[#6b6b6b]" />
        </div>
        <Icon w={7} h={9}><path d="M0 0v9L7 4.500z" fill="currentColor" stroke="none" /></Icon>
      </div>
    </footer>
  );
};

const App: React.FC = () => {
  const [activeSheet, setActiveSheet] = useState<string>('Liquidador');

  return (
    <div className="min-h-screen bg-white pt-[43px] px-[79px] font-['Lato',sans-serif]">
      <main className="border-2 border-black rounded-[16px] overflow-hidden bg-[#f0f0f0]">
        <TitleBar />
        <MenuBar />
        <Ribbon />
        <FormulaBar />
        <div className="relative flex mt-[6px]">
          <Sheet />
          <div className="flex flex-col items-center justify-between w-[16px] shrink-0 pt-[5px] pb-[1px] text-[#666]">
            <div className="flex flex-col items-center">
              <Icon w={9} h={8}><path d="M0 8h9L4.500 0z" fill="currentColor" stroke="none" /></Icon>
              <div className="w-[8px] h-[148px] mt-[4px] rounded-full bg-[#6b6b6b]" />
            </div>
            <Icon w={9} h={8}><path d="M0 0h9L4.500 8z" fill="currentColor" stroke="none" /></Icon>
          </div>
          <div className="absolute right-[24px] bottom-[8px] w-[33px] h-[37px] bg-white border-t border-l border-[#999] flex items-center justify-center text-[#107c41]">
            <Icon w={13} h={11}><path d="M1 6 4.500 9.500 12 1" strokeWidth="1.500" /></Icon>
          </div>
        </div>
        <SheetTabs active={activeSheet} onSelect={setActiveSheet} />
      </main>
    </div>
  );
};

export default App;
